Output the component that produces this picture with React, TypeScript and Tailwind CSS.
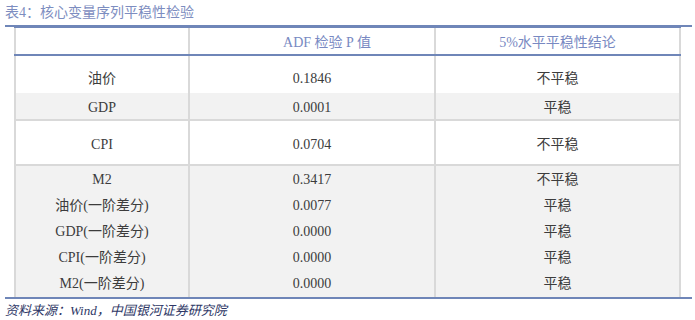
import React from "react";

const FONT = "font-['Liberation_Serif','Noto_Sans_CJK_SC',serif]";

function Cells({
  a,
  b,
  c,
  bClass = "",
  pad = "",
}: {
  a: React.ReactNode;
  b: React.ReactNode;
  c: React.ReactNode;
  bClass?: string;
  pad?: string;
}) {
  return (
    <div className="flex border-x-2 border-[#d9d9d9]">
      <div className={`w-[174px] border-r-2 border-[#d9d9d9] text-center ${pad}`}>{a}</div>
      <div className={`w-[246px] border-r-2 border-[#d9d9d9] text-center ${pad} ${bClass}`}>{b}</div>
      <div className={`flex-1 text-center ${pad}`}>{c}</div>
    </div>
  );
}

export default function App() {
  const merged = [
    ["M2", "0.3417", "不平稳"],
    ["油价(一阶差分)", "0.0077", "平稳"],
    ["GDP(一阶差分)", "0.0000", "平稳"],
    ["CPI(一阶差分)", "0.0000", "平稳"],
    ["M2(一阶差分)", "0.0000", "平稳"],
  ];
  const col = (i: number) => (
    <div className="flex flex-col">
      {merged.map((r) => (
        <div key={r[0]} className="h-[26px]">{r[i]}</div>
      ))}
    </div>
  );
  return (
    <div className={`w-[695px] h-[320px] bg-white overflow-hidden ${FONT}`}>
      <div className="pl-[5px] pt-[4px] text-[14px] leading-[18px] text-[#7d8dc0]">表4：核心变量序列平稳性检验</div>
      <div className="mt-[3px] ml-[5px] w-[687px] border-t-2 border-b-2 border-[#6f86b8]">
        <div className="ml-[9px] w-[667px] text-[14px] text-[#3c3c3c]">
          <div className="h-[1px] bg-[#6f86b8]" />
          <div className="leading-[28px] text-[#7889c2]">
            <Cells a="" b={<span>ADF 检验 P 值</span>} bClass="pl-[30px]" pad="h-[26px] pt-[1px]" c="5%水平平稳性结论" />
          </div>
          <div className="h-[2px] bg-[#6f86b8]" />
          <div className="bg-white leading-[26px]">
            <Cells a="油价" b="0.1846" c="不平稳" pad="pt-[10px] pb-[1px]" />
          </div>
          <div className="bg-[#f2f2f2] leading-[26px]">
            <Cells a="GDP" b="0.0001" c="平稳" pad="pt-[2px] h-[26px]" />
          </div>
          <div className="h-[2px] bg-[#d9d9d9]" />
          <div className="bg-white leading-[26px]">
            <Cells a="CPI" b="0.0704" c="不平稳" pad="pt-[11px] pb-[6px]" />
          </div>
          <div className="h-[2px] bg-[#d9d9d9]" />
          <div className="bg-[#f2f2f2] leading-[26px]">
            <Cells a={col(0)} b={col(1)} c={col(2)} pad="pt-[1px] h-[131px]" />
          </div>
        </div>
      </div>
      <div className="pl-[5px] mt-[3px] text-[13px] leading-[18px] italic text-[#2e3766]">资料来源：Wind，中国银河证券研究院</div>
    </div>
  );
}
